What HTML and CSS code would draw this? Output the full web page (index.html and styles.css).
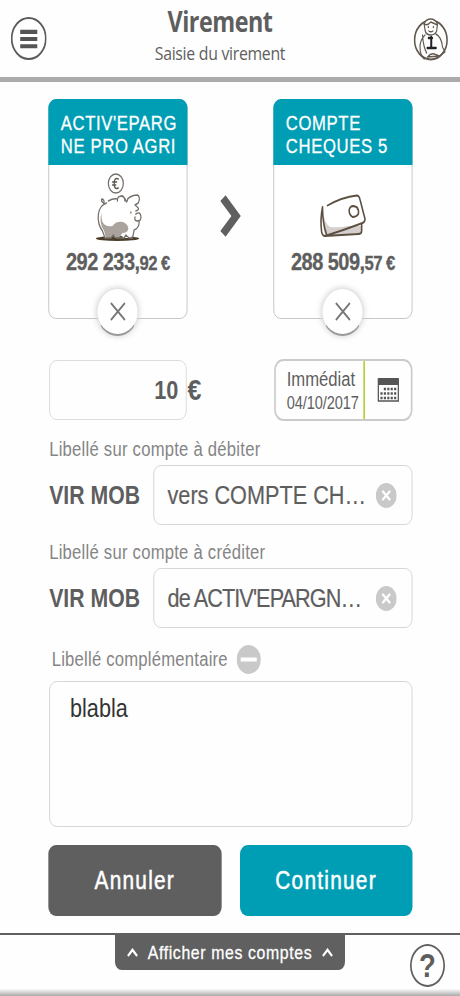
FILE: index.html
```html
<!DOCTYPE html>
<html lang="fr">
<head>
<meta charset="utf-8">
<title>Virement</title>
<link rel="stylesheet" href="styles.css">
</head>
<body>
<div class="screen">
<div class="stage">
  <header class="header">
    <svg class="menu" viewBox="0 0 42 42"><circle cx="21" cy="21" r="20" fill="none" stroke="#5b5b5b" stroke-width="2"/><path d="M11 14.500h20M11 21.500h20M11 28.500h20" stroke="#555" stroke-width="4"/></svg>
    <div class="titles"><h1>Virement</h1><p>Saisie du virement</p></div>
    <svg class="advisor" viewBox="0 0 42 44" fill="none" stroke="#62594f" stroke-width="1.400" stroke-linecap="round" stroke-linejoin="round"><circle cx="21" cy="23" r="19.500" stroke-width="1.900"/><path fill="#fff" d="M13 7q2-5 8-5 5 0 8 5l-1 7q-2 4-7 4-6 0-7-5z"/><path d="M13 7q4 2 8-2l8 3M18 9.500v1M24 9.500v1M18.500 14q2.500 1.500 5 0M14 18q-6 5-6 12 0 8 5 12M27 17q7 3 8 13l3 5-7 4-14 1q4-4 8-3l6 2M11 18q1 12 5 18"/><path d="M21.500 20v11M18.500 21h4M17 31h10" stroke="#222" stroke-width="2.400"/></svg>
  </header>

  <main class="main">
    <section class="accounts">
      <article class="card">
        <h2>ACTIV'EPARG<br>NE PRO AGRI</h2>
        <svg class="pig" viewBox="0 0 67 80" fill="none" stroke="#77716b" stroke-width="1.500" stroke-linecap="round" stroke-linejoin="round"><ellipse cx="33" cy="70.500" rx="26" ry="2.600" fill="#4b3e2b" stroke="none"/><path fill="#fff" stroke="none" d="M18 70l-2-7C8 52 8 36 22 33l22-2 10 8 4 18-7 7-2 6h-9l-2-3-8 3-2-4-6 4z"/><path fill="#aaa39d" stroke="none" d="M14 44q-2 16 13 14c5-7 19-5 19 3q-1 4-7 4-3 4-5 5l-5-3-4 3h-6l-2-7q-7-8-3-19z"/><path d="M20 35C8 38 7 54 15 63l3 7h7l3-3 4 3h9l2-3 4 3h4l2-8q6-2 6-8M16 35q-3-2-2-4 3 0 3 4zM22 33q6-3 11-2M33 33q-1-4 4-5 4-1 5 5M37 28q4 0 7 6l2-4M45 31q5-4 12-4 4 2 1 8l-4 2 4 3q1 2-3 3M55 46q5-3 6 2t-4 5q-4 0-3-4M49 44v1"/><ellipse cx="31" cy="15.500" rx="9" ry="9.500" fill="#fff"/><path d="M34 11q-5-2-5 4.500t5 4.500M27 14h5M27 17h4" stroke="#5d5750"/></svg>
        <p class="sum">292 233,<small>92 €</small></p>
        <button class="remove" aria-label="Retirer"><svg viewBox="0 0 18 18"><path d="M1 1l16 16M17 1L1 17" stroke="#777" stroke-width="2"/></svg></button>
      </article>
      <svg class="next" viewBox="0 0 24 40"><path d="M3 3l15 17L3 37" fill="none" stroke="#606060" stroke-width="8"/></svg>
      <article class="card">
        <h2>COMPTE<br>CHEQUES 5</h2>
        <svg class="wallet" viewBox="0 0 79 54" fill="none" stroke="#5c5042" stroke-width="1.900" stroke-linecap="round" stroke-linejoin="round"><path d="M17 24q1 11 8 15 10 1 22-1l16 0v7l-43 3q-5-8-3-24z" fill="#d5cfce" stroke="none"/><path d="M22 17.500Q40 9 57 7.500q3 0 4 4L67 31q0 3-3 4Q42 42 19 48q-3 0-4-4-2-12 1-25 0 16 5 28M19 48l40-2q4 0 4-3v-7"/><path d="M48 22q1-4 5-4l4 1q3 3 2 7-2 3-7 3-4-2-4-7z"/></svg>
        <p class="sum">288 509,<small>57 €</small></p>
        <button class="remove" aria-label="Retirer"><svg viewBox="0 0 18 18"><path d="M1 1l16 16M17 1L1 17" stroke="#777" stroke-width="2"/></svg></button>
      </article>
    </section>

    <section class="details">
      <div class="amount">10</div><b class="euro">€</b>
      <div class="date">
        <p>Immédiat<br><small>04/10/2017</small></p>
        <div class="pick"><svg viewBox="0 0 26 24"><path fill="none" stroke="#555" stroke-width="1.500" d="M1 1h24v22H1z"/><path fill="#555" d="M1 0h24v7H1z"/><path stroke="#555" stroke-width="2.600" stroke-dasharray="2.600 1.500" d="M7.600 11h15M3.500 15.500h19M3.500 20h19"/></svg></div>
      </div>
    </section>

    <p class="label">Libellé sur compte à débiter</p>
    <div class="line"><b>VIR MOB</b><div class="field"><span class="debit">vers COMPTE CH…</span><svg class="clear" viewBox="0 0 24 24"><circle cx="12" cy="12" r="12" fill="#c9c9c9"/><path d="M7.500 7.500l9 9M16.500 7.500l-9 9" stroke="#fff" stroke-width="2.500"/></svg></div></div>
    <p class="label second">Libellé sur compte à créditer</p>
    <div class="line"><b>VIR MOB</b><div class="field"><span class="credit">de ACTIV'EPARGN…</span><svg class="clear" viewBox="0 0 24 24"><circle cx="12" cy="12" r="12" fill="#c9c9c9"/><path d="M7.500 7.500l9 9M16.500 7.500l-9 9" stroke="#fff" stroke-width="2.500"/></svg></div></div>
    <div class="extra"><span>Libellé complémentaire</span><svg viewBox="0 0 30 30"><circle cx="15" cy="15" r="15" fill="#c9c9c9"/><path d="M5 15h20" stroke="#fff" stroke-width="4"/></svg></div>
    <div class="note">blabla</div>
    <div class="actions"><button class="cancel">Annuler</button><button class="continue">Continuer</button></div>
  </main>

  <footer class="footer">
    <div class="tab"><svg viewBox="0 0 14 9"><path d="M1.500 8L7 1.800 12.500 8"/></svg><span>Afficher mes comptes</span><svg viewBox="0 0 14 9"><path d="M1.500 8L7 1.800 12.500 8"/></svg></div>
    <div class="help">?</div>
  </footer>
</div>
</div>
</body>
</html>
```

FILE: styles.css
```css
* { box-sizing: border-box; margin: 0; padding: 0; }
html, body { width: 460px; height: 996px; overflow: hidden; background: #fefefe; }
body { font-family: "Liberation Sans", Arial, sans-serif; color: #5e5e5e; }
button { border: 0; font-family: inherit; }
.screen { width: 460px; height: 996px; overflow: hidden; }
/* Condensed proportions apply to every control and label. */
.stage { width: 552px; height: 996px; transform: scaleX(.83333); transform-origin: 0 0; display: flex; flex-direction: column; }
.header { height: 82px; flex: none; display: flex; justify-content: space-between; padding: 0 14px 0 13px; border-bottom: 5px solid #ababab; }
.menu { width: 43px; height: 43px; margin-top: 17px; }
.advisor { width: 42px; height: 44px; margin-top: 17px; }
.titles { text-align: center; font-family: "Open Sans", sans-serif; white-space: nowrap; padding: 1px 24px 0 0; }
.titles h1 { font-size: 28px; line-height: 40px; font-weight: 700; letter-spacing: -.6px; }
.titles p { font-size: 19px; line-height: 25px; letter-spacing: -.35px; }
.main { height: 851px; flex: none; padding: 17px 57px 0 58px; }
.accounts { height: 220px; display: flex; justify-content: space-between; align-items: flex-start; }
.card { width: 167px; height: 220px; border: 1px solid #c2c2c2; border-radius: 9px; position: relative; background: #fff; }
.card h2 { height: 66px; margin: -1px -1px 0; padding: 13px 0 0 15px; background: #009eb4; color: #fff; border-radius: 9px 9px 0 0; font-size: 20px; line-height: 22.500px; font-weight: 400; letter-spacing: .75px; white-space: nowrap; -webkit-text-stroke: .3px #fff; }
.pig { display: block; width: 67px; height: 80px; margin: 3px 0 0 49px; }
.wallet { display: block; width: 79px; height: 54px; margin: 23px 0 6px 42px; }
.sum { font-size: 24px; line-height: 28px; font-weight: 700; text-align: center; letter-spacing: -.65px; white-space: nowrap; -webkit-text-stroke: .3px #5e5e5e; }
.sum small { font-size: 20px; }
.remove { position: absolute; left: 57px; bottom: -18px; width: 50px; height: 48px; border-radius: 50%; background: #fff; border: 1px solid #e4e4e4; border-bottom: 2px solid #999; box-shadow: 0 0 7px #ccc; display: grid; place-items: center; }
.remove svg { width: 19px; height: 19px; }
.next { width: 26px; height: 42px; margin-top: 96px; }
.details { display: flex; margin-top: 40px; height: 62px; }
.amount { width: 165px; height: 60px; margin: 1px 0 0 1px; border: 1px solid #d9d9d9; border-radius: 9px; font-size: 26px; font-weight: 700; text-align: right; line-height: 58px; padding-right: 9px; }
.euro { font-size: 30px; line-height: 62px; width: 34px; padding-left: 1px; }
.date { width: 166px; height: 62px; margin-left: auto; border: 2px solid #cbcbcb; border-radius: 11px; display: flex; }
.date p { flex: 1; font-size: 20px; line-height: 23px; padding: 7px 0 0 13px; white-space: nowrap; }
.date small { font-size: 17.500px; letter-spacing: -.1px; }
.pick { width: 57px; border-left: 2px solid #afd332; display: grid; place-items: center; }
.pick svg { width: 28px; height: 24px; }
.label { height: 44px; padding: 17px 0 0 1px; font-size: 20px; line-height: 22px; letter-spacing: .28px; color: #858585; white-space: nowrap; }
.line { display: flex; align-items: center; height: 60px; justify-content: space-between; }
.line b { font-size: 25.500px; padding-left: 1px; white-space: nowrap; }
.field { width: 311px; height: 60px; border: 1px solid #d3d3d3; border-radius: 9px; display: flex; align-items: center; justify-content: space-between; padding: 0 18px 0 16px; font-size: 26px; white-space: nowrap; -webkit-text-stroke: .2px #5e5e5e; }
.credit { letter-spacing: -1.100px; }
.clear { width: 25px; height: 25px; flex: none; }
.second { height: 43px; padding-top: 16px; }
.extra { height: 53px; display: flex; align-items: center; padding: 10px 0 0 4px; gap: 11px; font-size: 20px; letter-spacing: .26px; color: #858585; }
.extra svg { width: 29px; height: 29px; }
.note { height: 146px; margin-left: 1px; border: 1px solid #d3d3d3; border-radius: 9px; padding: 11px 24px; font-size: 26px; line-height: 30px; color: #333; }
.actions { display: flex; justify-content: space-between; margin-top: 18px; }
.actions button { width: 207.500px; height: 71px; border-radius: 9px; color: #fff; font-size: 25px; letter-spacing: 1.500px; -webkit-text-stroke: .5px #fff; }
.cancel { background: #5f5f5f; }
.continue { background: #009eb4; }
.footer { flex: 1; border-top: 2px solid #606060; position: relative; background: linear-gradient(#fff0 88%, #aaa); }
.tab { width: 276px; height: 35px; margin-left: 138px; background: #606060; border-radius: 0 0 8px 8px; color: #fff; display: flex; align-items: center; justify-content: space-between; padding: 0 14px; font-size: 19px; letter-spacing: .75px; white-space: nowrap; -webkit-text-stroke: .3px #fff; }
.tab svg { width: 14px; height: 9px; fill: none; stroke: #fff; stroke-width: 2.500; }
.help { position: absolute; left: 492px; top: 9px; width: 42px; height: 43px; border: 2px solid #5f5f5f; border-radius: 50%; text-align: center; font-size: 33px; line-height: 40px; font-weight: 700; }
```
